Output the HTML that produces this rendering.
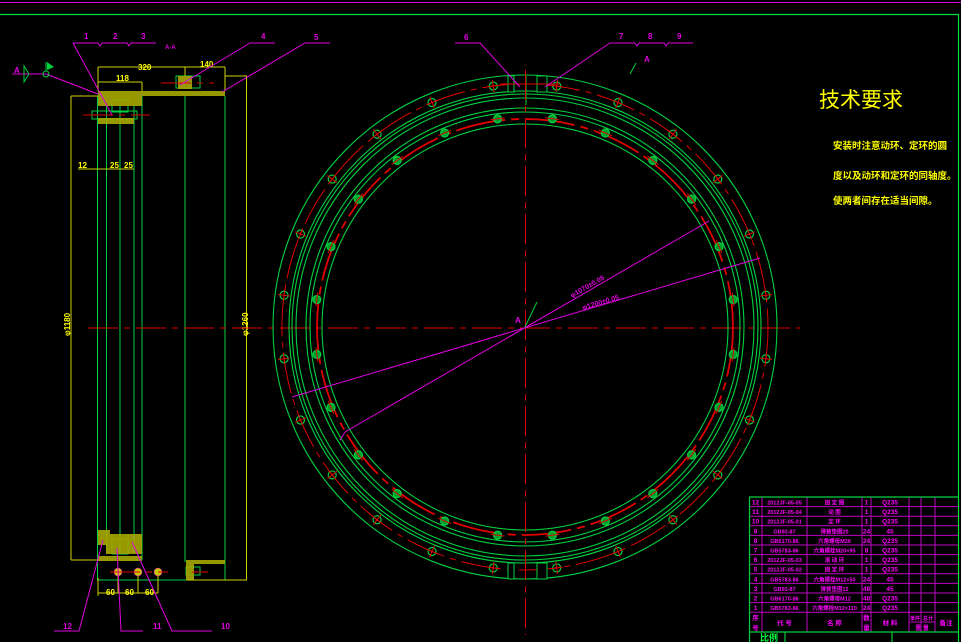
<!DOCTYPE html>
<html><head><meta charset="utf-8"><style>
html,body{margin:0;padding:0;background:#000;}
svg{display:block}
text{font-family:"Liberation Sans","Noto Sans CJK SC",sans-serif;}
</style></head><body>
<svg width="961" height="642" viewBox="0 0 961 642" xmlns="http://www.w3.org/2000/svg">
<rect width="961" height="642" fill="#000"/>
<line x1="0" y1="2.5" x2="961" y2="2.5" stroke="#e000e0" stroke-width="1"/>
<polyline points="0,14.5 958.5,14.5 958.5,642" fill="none" stroke="#00e040" stroke-width="1.2"/>

<!-- SIDE VIEW -->
<g stroke="#00d040" stroke-width="1" fill="none">
<line x1="97.5" y1="96" x2="97.5" y2="580"/>
<line x1="106.5" y1="105" x2="106.5" y2="553"/>
<line x1="120" y1="105" x2="120" y2="553"/>
<line x1="134" y1="105" x2="134" y2="553"/>
<line x1="142" y1="96" x2="142" y2="560"/>
<line x1="185" y1="96" x2="185" y2="562"/>
<line x1="225" y1="96" x2="225" y2="580"/>
<line x1="97" y1="580" x2="187" y2="580"/>
<line x1="185" y1="580" x2="225" y2="580"/>
<rect x="176" y="76" width="24" height="12"/>
<rect x="92" y="111" width="45" height="8"/>
<rect x="112" y="100" width="16" height="12"/>
<rect x="112" y="539" width="16" height="15"/>
<rect x="186" y="567" width="14" height="8"/>
</g>
<g fill="#a8a800" opacity="0.9">
<rect x="98" y="91" width="127" height="5"/>
<rect x="98" y="96" width="44" height="10"/>
<rect x="98" y="118" width="36" height="6"/>
<rect x="178" y="76" width="14" height="13"/>
<rect x="98" y="530" width="12" height="15"/>
<rect x="106" y="534" width="36" height="20"/>
<rect x="98" y="556" width="44" height="5"/>
<rect x="186" y="560" width="39" height="4"/>
<rect x="186" y="560" width="8" height="20"/>
</g>
<g stroke="#d0d000" stroke-width="1" fill="none">
<line x1="71" y1="96" x2="71" y2="560"/>
<line x1="71" y1="96" x2="98" y2="96"/>
<line x1="71" y1="560" x2="98" y2="560"/>
<line x1="246.5" y1="76" x2="246.5" y2="580"/>
<line x1="225" y1="76" x2="247" y2="76"/>
<line x1="187" y1="580" x2="247" y2="580"/>
<line x1="98" y1="67" x2="225" y2="67"/>
<line x1="98" y1="67" x2="98" y2="91"/>
<line x1="225" y1="67" x2="225" y2="91"/>
<line x1="185" y1="67" x2="185" y2="76"/>
<line x1="98" y1="82" x2="142" y2="82"/>
<line x1="142" y1="82" x2="142" y2="91"/>
<line x1="78" y1="169" x2="134" y2="169"/>
<line x1="98" y1="593" x2="158" y2="593"/>
<line x1="118" y1="570" x2="118" y2="593"/>
<line x1="138" y1="570" x2="138" y2="593"/>
<line x1="158" y1="570" x2="158" y2="593"/>
<line x1="98" y1="578" x2="98" y2="596"/>
</g>
<g fill="#ffff00" font-size="8" font-weight="bold">
<text x="138" y="70">320</text>
<text x="200" y="67">140</text>
<text x="116" y="81">118</text>
<text x="78" y="168">12</text>
<text x="110" y="168">25</text>
<text x="124" y="168">25</text>
<text x="106" y="595">60</text>
<text x="125" y="595">60</text>
<text x="145" y="595">60</text>
<text transform="translate(70,336) rotate(-90)">φ1180</text>
<text transform="translate(248,336) rotate(-90)">φ1260</text>
</g>
<g fill="#c8c800" stroke="#e000e0" stroke-width="0.5">
<circle cx="118" cy="572" r="4"/><circle cx="138" cy="572" r="4"/><circle cx="158" cy="572" r="4"/>
</g>
<g stroke="#e00000" stroke-width="1" stroke-dasharray="30 6 6 6">
<line x1="88" y1="328" x2="800" y2="328"/>
<line x1="83" y1="115" x2="150" y2="115"/>
<line x1="161" y1="83" x2="214" y2="83"/>
<line x1="110" y1="572" x2="168" y2="572"/>
<line x1="192" y1="572" x2="208" y2="572"/>
</g>
<g stroke="#e000e0" stroke-width="1" fill="none">
<polyline points="73,43 98,43 100,46 102,43 127,43 129,46 131,43 156,43"/>
<line x1="73" y1="43" x2="112" y2="115"/>
<line x1="12" y1="74" x2="46" y2="74"/>
<line x1="46" y1="74" x2="98" y2="94"/>
<polyline points="275,43 250,43 180,85"/>
<polyline points="330,43 305,43 222,92"/>
<polyline points="54,631 79,631 103,540"/>
<polyline points="143,631 121,631 117,548"/>
<polyline points="212,631 172,631 132,542"/>
</g>
<g stroke="#00d040" fill="none" stroke-width="1">
<polyline points="29,74 24,66 24,82 29,74"/>
<circle cx="46" cy="74" r="3"/>
<line x1="46" y1="71" x2="46" y2="62"/>
</g>
<polygon points="47,62 54,67 47,70" fill="#00d040"/>
<g fill="#e000e0" font-size="8" font-weight="bold">
<text x="84" y="39">1</text><text x="113" y="39">2</text><text x="141" y="39">3</text>
<text x="165" y="49" font-size="6">A-A</text>
<text x="261" y="39">4</text><text x="314" y="40">5</text>
<text x="14" y="73">A</text>
<text x="63" y="629">12</text><text x="153" y="629">11</text><text x="221" y="629">10</text>
<text x="464" y="40">6</text><text x="619" y="39">7</text><text x="648" y="39">8</text><text x="677" y="39">9</text>
<text x="644" y="62">A</text><text x="515" y="323">A</text>
</g>

<!-- FRONT VIEW -->
<defs>
<g id="ho"><circle cx="525" cy="84" r="4" fill="none" stroke="#00d040" stroke-width="1.2"/><line x1="519" y1="84" x2="531" y2="84" stroke="#e00000" stroke-width="1"/><line x1="525" y1="78" x2="525" y2="90" stroke="#e00000" stroke-width="1"/></g>
<g id="hi"><circle cx="525" cy="117" r="4" fill="#00a030" stroke="#00d040" stroke-width="1.2"/><line x1="518" y1="117" x2="532" y2="117" stroke="#e00000" stroke-width="1"/></g>
</defs>
<g fill="none" stroke="#00d040" stroke-width="1.1">
<circle cx="525" cy="327" r="252"/>
<circle cx="525" cy="327" r="236"/>
<circle cx="525" cy="327" r="233"/>
<circle cx="525" cy="327" r="229"/>
<circle cx="525" cy="327" r="219"/>
<circle cx="525" cy="327" r="215"/>
<circle cx="525" cy="327" r="203"/>
</g>
<g fill="none" stroke="#e00000">
<circle cx="525" cy="327" r="243" stroke-width="1" stroke-dasharray="40 6 6 6"/>
<circle cx="525" cy="327" r="208" stroke-width="1.8" stroke-dasharray="50 6 8 6"/>
</g>
<g>
<use href="#ho" transform="rotate(7.5 525 327)"/><use href="#ho" transform="rotate(22.5 525 327)"/><use href="#ho" transform="rotate(37.5 525 327)"/><use href="#ho" transform="rotate(52.5 525 327)"/><use href="#ho" transform="rotate(67.5 525 327)"/><use href="#ho" transform="rotate(82.5 525 327)"/><use href="#ho" transform="rotate(97.5 525 327)"/><use href="#ho" transform="rotate(112.5 525 327)"/><use href="#ho" transform="rotate(127.5 525 327)"/><use href="#ho" transform="rotate(142.5 525 327)"/><use href="#ho" transform="rotate(157.5 525 327)"/><use href="#ho" transform="rotate(172.5 525 327)"/><use href="#ho" transform="rotate(187.5 525 327)"/><use href="#ho" transform="rotate(202.5 525 327)"/><use href="#ho" transform="rotate(217.5 525 327)"/><use href="#ho" transform="rotate(232.5 525 327)"/><use href="#ho" transform="rotate(247.5 525 327)"/><use href="#ho" transform="rotate(262.5 525 327)"/><use href="#ho" transform="rotate(277.5 525 327)"/><use href="#ho" transform="rotate(292.5 525 327)"/><use href="#ho" transform="rotate(307.5 525 327)"/><use href="#ho" transform="rotate(322.5 525 327)"/><use href="#ho" transform="rotate(337.5 525 327)"/><use href="#ho" transform="rotate(352.5 525 327)"/>
<use href="#hi" transform="rotate(7.5 525 327)"/><use href="#hi" transform="rotate(22.5 525 327)"/><use href="#hi" transform="rotate(37.5 525 327)"/><use href="#hi" transform="rotate(52.5 525 327)"/><use href="#hi" transform="rotate(67.5 525 327)"/><use href="#hi" transform="rotate(82.5 525 327)"/><use href="#hi" transform="rotate(97.5 525 327)"/><use href="#hi" transform="rotate(112.5 525 327)"/><use href="#hi" transform="rotate(127.5 525 327)"/><use href="#hi" transform="rotate(142.5 525 327)"/><use href="#hi" transform="rotate(157.5 525 327)"/><use href="#hi" transform="rotate(172.5 525 327)"/><use href="#hi" transform="rotate(187.5 525 327)"/><use href="#hi" transform="rotate(202.5 525 327)"/><use href="#hi" transform="rotate(217.5 525 327)"/><use href="#hi" transform="rotate(232.5 525 327)"/><use href="#hi" transform="rotate(247.5 525 327)"/><use href="#hi" transform="rotate(262.5 525 327)"/><use href="#hi" transform="rotate(277.5 525 327)"/><use href="#hi" transform="rotate(292.5 525 327)"/><use href="#hi" transform="rotate(307.5 525 327)"/><use href="#hi" transform="rotate(322.5 525 327)"/><use href="#hi" transform="rotate(337.5 525 327)"/><use href="#hi" transform="rotate(352.5 525 327)"/>
</g>
<g fill="#000" stroke="#00d040" stroke-width="1">
<rect x="508" y="76" width="6" height="16"/><rect x="537" y="76" width="10" height="16"/>
<rect x="508" y="563" width="6" height="16"/><rect x="537" y="563" width="10" height="16"/>
</g>
<line x1="526" y1="76" x2="526" y2="105" stroke="#00d040"/>
<g stroke="#e00000" stroke-width="1" stroke-dasharray="30 6 6 6">
<line x1="525.5" y1="70" x2="525.5" y2="635"/>
</g>
<line x1="500" y1="84" x2="560" y2="84" stroke="#e00000"/>
<g stroke="#e000e0" stroke-width="1" fill="none">
<polyline points="455,43 480,43 520,87"/>
<polyline points="610,43 545,87"/>
<polyline points="610,43 635,43 637,46 639,43 664,43 666,46 668,43 693,43"/>
<line x1="292" y1="397" x2="760" y2="258"/>
<line x1="345" y1="432" x2="709" y2="221"/>
<polyline points="340,440 345,432"/>
</g>
<line x1="630" y1="74" x2="636" y2="63" stroke="#00d040"/>
<line x1="525" y1="327" x2="537" y2="302" stroke="#00d040"/>
<g fill="#e000e0" font-size="7" font-weight="bold">
<text transform="translate(572,298) rotate(-30)">φ1070±0.05</text>
<text transform="translate(583,310) rotate(-16.5)">φ1200±0.05</text>
</g>

<g fill="#ffff00">
<text x="819" y="107" font-size="21" font-family="'Noto Sans CJK SC',sans-serif">技术要求</text>
<text x="833" y="149" font-size="9.5" font-weight="bold" font-family="'Noto Sans CJK SC',sans-serif">安装时注意动环、定环的圆</text>
<text x="833" y="179" font-size="9.5" font-weight="bold" font-family="'Noto Sans CJK SC',sans-serif">度以及动环和定环的同轴度。</text>
<text x="833" y="204" font-size="9.5" font-weight="bold" font-family="'Noto Sans CJK SC',sans-serif">使两者间存在适当间隙。</text>
</g>

<!-- TABLE -->
<g stroke="#c000c0" stroke-width="1" fill="none">
<line x1="762" y1="497" x2="762" y2="632"/>
<line x1="807" y1="497" x2="807" y2="632"/>
<line x1="862" y1="497" x2="862" y2="632"/>
<line x1="871" y1="497" x2="871" y2="632"/>
<line x1="909" y1="497" x2="909" y2="632"/>
<line x1="921" y1="497" x2="921" y2="632"/>
<line x1="935" y1="497" x2="935" y2="632"/>
<line x1="749" y1="506.6" x2="958" y2="506.6"/>
<line x1="749" y1="516.2" x2="958" y2="516.2"/>
<line x1="749" y1="525.8" x2="958" y2="525.8"/>
<line x1="749" y1="535.4" x2="958" y2="535.4"/>
<line x1="749" y1="545" x2="958" y2="545"/>
<line x1="749" y1="554.6" x2="958" y2="554.6"/>
<line x1="749" y1="564.2" x2="958" y2="564.2"/>
<line x1="749" y1="573.8" x2="958" y2="573.8"/>
<line x1="749" y1="583.4" x2="958" y2="583.4"/>
<line x1="749" y1="593" x2="958" y2="593"/>
<line x1="749" y1="602.6" x2="958" y2="602.6"/>
<line x1="749" y1="612.2" x2="958" y2="612.2"/>
<line x1="909" y1="622" x2="935" y2="622"/>
</g>
<g stroke="#00d040" stroke-width="1.2" fill="none">
<line x1="749" y1="497" x2="958" y2="497"/>
<line x1="749.5" y1="497" x2="749.5" y2="642"/>
<line x1="749" y1="632" x2="958" y2="632"/>
<line x1="785" y1="632" x2="785" y2="642"/>
<line x1="892" y1="632" x2="892" y2="642"/>
</g>
<g fill="#ff00ff" font-size="6.5" font-weight="bold" font-family="'Liberation Sans','Noto Sans CJK SC',sans-serif">
<g text-anchor="middle">
<text x="755.5" y="504.5">12</text><text x="755.5" y="514.1">11</text><text x="755.5" y="523.7">10</text><text x="755.5" y="533.3">9</text><text x="755.5" y="542.9">8</text><text x="755.5" y="552.5">7</text><text x="755.5" y="562.1">6</text><text x="755.5" y="571.7">5</text><text x="755.5" y="581.3">4</text><text x="755.5" y="590.9">3</text><text x="755.5" y="600.5">2</text><text x="755.5" y="610.1">1</text>
<g font-size="5.5">
<text x="784.5" y="504.5">2012JF-05-05</text><text x="784.5" y="514.1">2012JF-05-04</text><text x="784.5" y="523.7">2012JF-05-01</text><text x="784.5" y="533.3">GB93-87</text><text x="784.5" y="542.9">GB6170-86</text><text x="784.5" y="552.5">GB5783-86</text><text x="784.5" y="562.1">2012JF-05-03</text><text x="784.5" y="571.7">2012JF-05-02</text><text x="784.5" y="581.3">GB5783-86</text><text x="784.5" y="590.9">GB93-87</text><text x="784.5" y="600.5">GB6170-86</text><text x="784.5" y="610.1">GB5783-86</text>
<text x="834.5" y="504.5">固 定 圈</text><text x="834.5" y="514.1">动 圈</text><text x="834.5" y="523.7">定 环</text><text x="834.5" y="533.3">弹簧垫圈20</text><text x="834.5" y="542.9">六角螺母M20</text><text x="834.5" y="552.5">六角螺栓M20×95</text><text x="834.5" y="562.1">滚 动 环</text><text x="834.5" y="571.7">固 定 环</text><text x="834.5" y="581.3">六角螺栓M12×50</text><text x="834.5" y="590.9">弹簧垫圈12</text><text x="834.5" y="600.5">六角螺母M12</text><text x="834.5" y="610.1">六角螺栓M12×110</text>
</g>
<text x="866.5" y="504.5">1</text><text x="866.5" y="514.1">1</text><text x="866.5" y="523.7">1</text><text x="866.5" y="533.3">24</text><text x="866.5" y="542.9">24</text><text x="866.5" y="552.5">8</text><text x="866.5" y="562.1">1</text><text x="866.5" y="571.7">1</text><text x="866.5" y="581.3">24</text><text x="866.5" y="590.9">48</text><text x="866.5" y="600.5">48</text><text x="866.5" y="610.1">24</text>
<text x="890" y="504.5">Q235</text><text x="890" y="514.1">Q235</text><text x="890" y="523.7">Q235</text><text x="890" y="533.3">45</text><text x="890" y="542.9">Q235</text><text x="890" y="552.5">Q235</text><text x="890" y="562.1">Q235</text><text x="890" y="571.7">Q235</text><text x="890" y="581.3">45</text><text x="890" y="590.9">45</text><text x="890" y="600.5">Q235</text><text x="890" y="610.1">Q235</text>
<text x="755.5" y="620">序</text><text x="755.5" y="630">号</text>
<text x="784.5" y="625">代 号</text><text x="834.5" y="625">名 称</text>
<text x="866.5" y="620">数</text><text x="866.5" y="630">量</text>
<text x="890" y="625">材 料</text>
<text x="915" y="620" font-size="5">单件</text><text x="928" y="620" font-size="5">总计</text>
<text x="922" y="630" font-size="6">重 量</text>
<text x="946" y="625">备注</text>
</g>
</g>
<text x="760" y="641" fill="#00ff40" font-size="9" font-weight="bold" font-family="'Noto Sans CJK SC',sans-serif">比例</text>
</svg>
</body></html>
